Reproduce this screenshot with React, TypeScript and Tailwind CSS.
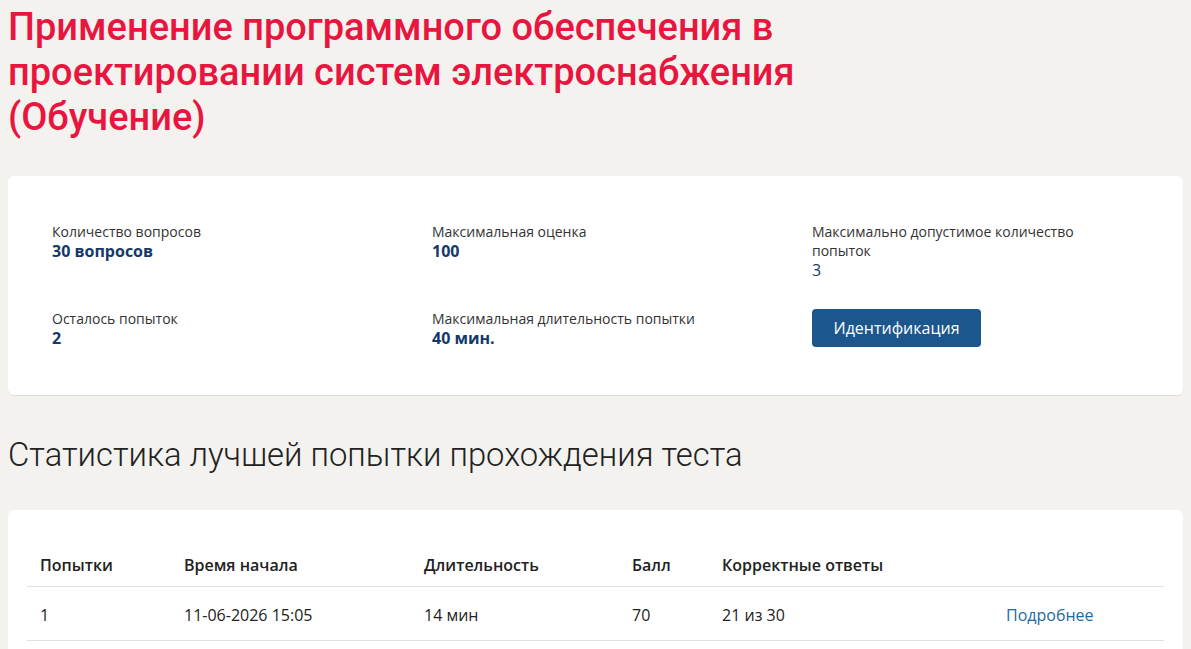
import React from 'react';

const info = [
  { label: 'Количество вопросов', value: '30 вопросов' },
  { label: 'Максимальная оценка', value: '100' },
  { label: 'Максимально допустимое количество попыток', value: '3', light: true },
  { label: 'Осталось попыток', value: '2' },
  { label: 'Максимальная длительность попытки', value: '40 мин.' },
];

const headers = ['Попытки', 'Время начала', 'Длительность', 'Балл', 'Корректные ответы', ''];
const colWidths = ['w-[144px]', 'w-[240px]', 'w-[208px]', 'w-[90px]', 'w-[284px]', ''];

export default function App() {
  return (
    <div className="min-h-[649px] bg-[#f3f2ef] px-2 pb-6 font-['Open_Sans',sans-serif] text-[#222]">
      <h1 className="pt-[5px] max-w-[830px] text-[38px] leading-[45px] font-medium text-[#e8163f] font-['Roboto',sans-serif]">
        Применение программного обеспечения в проектировании систем электроснабжения (Обучение)
      </h1>

      <div className="mt-[36px] rounded-md bg-white shadow-[0_1px_1px_rgba(0,0,0,0.08)] pl-11 pr-6 pt-[46px] pb-[46px]">
        <div className="grid grid-cols-[380px_380px_1fr] gap-y-[28px]">
          {info.slice(0, 3).map((it) => (
            <div key={it.label} className="pr-10">
              <div className="text-[14px] leading-[19px] text-[#333]">{it.label}</div>
              <div className={`text-[16px] leading-[21px] text-[#13386a] ${it.light ? 'font-normal' : 'font-bold'}`}>{it.value}</div>
            </div>
          ))}
          {info.slice(3).map((it) => (
            <div key={it.label}>
              <div className="text-[14px] leading-[19px] text-[#333]">{it.label}</div>
              <div className="text-[16px] leading-[21px] font-bold text-[#13386a]">{it.value}</div>
            </div>
          ))}
          <div>
            <button className="h-[38px] w-[169px] rounded bg-[#1b578c] text-[16px] text-white">Идентификация</button>
          </div>
        </div>
      </div>

      <h2 className="mt-[38px] text-[32.8px] leading-[44px] font-light text-[#222] font-['Roboto',sans-serif]">
        Статистика лучшей попытки прохождения теста
      </h2>

      <div className="mt-[33px] rounded-md bg-white px-[19px] pt-[34px] pb-4">
        <table className="w-full table-fixed border-collapse text-[16px]">
          <thead>
            <tr className="border-b border-[#e2e0dc]">
              {headers.map((h, i) => (
                <th key={i} className={`pt-[10px] pb-[10px] px-[13px] leading-[22px] text-left font-semibold ${colWidths[i]}`}>
                  {h}
                </th>
              ))}
            </tr>
          </thead>
          <tbody>
            <tr className="border-b border-[#e2e0dc]">
              {['1', '11-06-2026 15:05', '14 мин', '70', '21 из 30'].map((c, i) => (
                <td key={i} className="pt-[17px] pb-[14px] px-[13px] leading-[22px]">{c}</td>
              ))}
              <td className="pt-[17px] pb-[14px] px-[13px] leading-[22px] text-[#1b6aa5]">Подробнее</td>
            </tr>
          </tbody>
        </table>
      </div>
    </div>
  );
}
